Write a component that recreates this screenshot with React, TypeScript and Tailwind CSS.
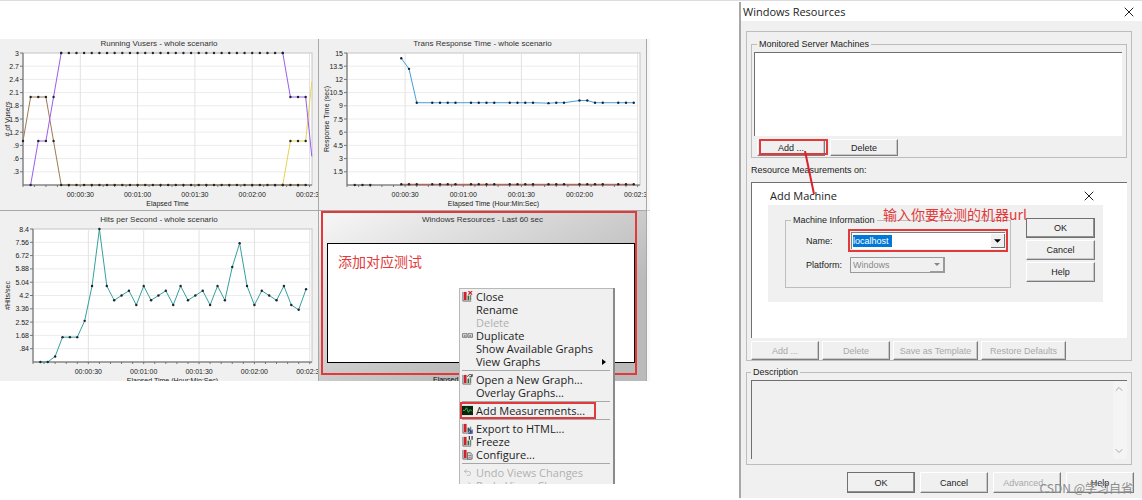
import type { ReactNode } from 'react';
import { X, ChevronUp, ChevronDown, Undo2, Redo2 } from 'lucide-react';
import clsx from 'clsx';

interface Series {
  color: string;
  points: [number, number][];
}

interface ChartProps {
  title: string;
  yTitle: string;
  xTitle: string;
  yLabels: string[];
  max: number;
  left: number;
  right: number;
  bottom: number;
  width: number;
  height: number;
  step: number;
  series: Series[];
}

const range = (from: number, to: number) => Array.from({ length: to - from + 1 }, (_, i) => from + i);
const flat = (from: number, to: number, value: number) => range(from, to).map((k): [number, number] => [k, value]);

// points are [sample index, value], one sample every 4 seconds
const vuserSeries: Series[] = [
  { color: '#e8d44d', points: [[34, 0], [35, 1], [36, 1], [37, 1], [37.8, 2.35]] },
  { color: '#a07a50', points: [[0, 1], [1, 2], [2, 2], [3, 2], [4, 1], ...flat(5, 37, 0)] },
  { color: '#9a5cf0', points: [[1, 0], [2, 1], [3, 1], [4, 2], [5, 3]] },
  { color: '#c4c4c4', points: flat(5, 34, 3) },
  { color: '#9a5cf0', points: [[34, 3], [35, 2], [36, 2], [37, 2], [37.8, 0.65]] },
];

const sampleTimes = [7, 8, 9, 11, 12, 13, 14, 16, 17, 18, 19, 21, 22, 23, 24, 26, 27, 28, 30, 31, 32, 33, 35, 36, 37];
const responseTimes: Record<number, number> = { 7: 14.4, 8: 13.2, 26: 9.3, 30: 9.6, 31: 9.6 };

const responseSeries: Series[] = [
  { color: '#8a8a8a', points: flat(1, 3, 0) },
  { color: '#c0553f', points: sampleTimes.map((k) => [k, 0.08]) },
  { color: '#3fa0e0', points: sampleTimes.map((k) => [k, responseTimes[k] ?? 9.35]) },
];

const hits = [
  0, 0, 0.35, 1.57, 1.57, 1.57, 2.6, 4.8, 8.4, 4.8, 3.9, 4.2, 4.5, 3.6, 4.8, 3.9, 4.2, 4.5, 3.6, 4.8, 3.9, 4.2, 4.5,
  3.6, 4.8, 3.9, 6, 7.5, 4.8, 3.6, 4.5, 4.2, 3.9, 4.8, 3.6, 3.3, 4.6,
];
const hitSeries: Series[] = [{ color: '#35a0a0', points: hits.map((v, i) => [i + 1, v]) }];

const timeLabels = ['00:00:30', '00:01:00', '00:01:30', '00:02:00', '00:02:30'];

function Chart({ title, yTitle, xTitle, yLabels, max, left, right, bottom, width, height, step, series }: ChartProps) {
  const top = 4;
  const x = (k: number) => left + k * step;
  const y = (v: number) => bottom - (v / max) * (bottom - top);
  return (
    <section>
      <h2 className="text-center text-[8px] leading-[10px] text-[#333]">{title}</h2>
      <svg viewBox={`0 0 ${width} ${height}`} className="block w-full overflow-hidden text-[7px]" fill="#222">
        <rect x={left} y={top} width={right - left} height={bottom - top} fill="#fff" stroke="#c4c4c4" />
        {yLabels.map((label, i) => {
          const ly = top + (i * (bottom - top)) / yLabels.length;
          return (
            <g key={label}>
              {i > 0 && <line x1={left} x2={right} y1={ly} y2={ly} stroke="#ececec" />}
              <line x1={left - 3} x2={left} y1={ly} y2={ly} stroke="#777" />
              <text x={left - 4} y={ly + 2.5} textAnchor="end">
                {label}
              </text>
            </g>
          );
        })}
        {timeLabels.map((label, i) => (
          <g key={label}>
            <line x1={x((i + 1) * 7.5)} x2={x((i + 1) * 7.5)} y1={top} y2={bottom + 3} stroke="#e2e2e2" />
            <text x={x((i + 1) * 7.5)} y={bottom + 12} textAnchor="middle">
              {label}
            </text>
          </g>
        ))}
        {range(0, 25).map((i) => (
          <line key={i} x1={x(i * 1.5)} x2={x(i * 1.5)} y1={bottom} y2={bottom + 2} stroke="#777" />
        ))}
        <path d={`M${left} ${top}V${bottom}H${right}`} fill="none" stroke="#666" />
        {series.map((s, i) => (
          <g key={i}>
            <polyline points={s.points.map(([k, v]) => `${x(k)},${y(v)}`).join(' ')} fill="none" stroke={s.color} />
            {s.points
              .filter(([k]) => Number.isInteger(k))
              .map(([k, v]) => (
                <circle key={k} cx={x(k)} cy={y(v)} r="1.2" fill="#1d2430" />
              ))}
          </g>
        ))}
        <text x={(left + right) / 2} y={bottom + 21} textAnchor="middle">
          {xTitle}
        </text>
        <text transform={`translate(10 ${(top + bottom) / 2}) rotate(-90)`} textAnchor="middle">
          {yTitle}
        </text>
      </svg>
    </section>
  );
}

function GraphIcon({ children }: { children?: ReactNode }) {
  return (
    <svg viewBox="0 0 12 12" className="size-[11px]" fill="none">
      <path d="M1 1V11H10" stroke="#666" />
      <path d="M2 1h3v9H2z" fill="#d0202c" />
      <path d="M6 5h2v5H6z" fill="#24703c" />
      <path d="M9 4h1v6H9z" fill="#555" />
      {children}
    </svg>
  );
}

const closeIcon = (
  <GraphIcon>
    <path d="M7 0l4 4M11 0L7 4" stroke="#d0202c" strokeWidth="1.3" />
  </GraphIcon>
);
const openIcon = (
  <GraphIcon>
    <path d="M6 3c1-3 4-3 5-1M11 0v3H8" stroke="#222" />
  </GraphIcon>
);
const exportIcon = (
  <GraphIcon>
    <path d="M7 6l3 4M11 7v4H7" stroke="#2a3c9a" strokeWidth="1.3" />
  </GraphIcon>
);
const freezeIcon = (
  <GraphIcon>
    <path d="M8 0v4M11 0v4" stroke="#333" strokeWidth="1.3" />
  </GraphIcon>
);
const configureIcon = (
  <GraphIcon>
    <path d="M6 4h3l2 2v5H6z" fill="#ddd" stroke="#666" />
    <path d="M7 7h3M7 9h3" stroke="#777" />
  </GraphIcon>
);
const duplicateIcon = (
  <svg viewBox="0 0 12 12" className="size-[11px]" fill="none" stroke="#777">
    <path d="M.5 4h5v4h-5zM6.500 4h5v4h-5z" fill="#ddd" />
    <path d="M2 6.500h2M8 6.500h2" stroke="#444" />
  </svg>
);
const measureIcon = (
  <svg viewBox="0 0 12 12" className="size-[11px]" fill="none">
    <path d="M0 1h12v10H0z" fill="#0b2410" />
    <path d="M1 6h2l2-3 2 5 2-3 2 2" stroke="#3ec24e" />
  </svg>
);

interface MenuItem {
  label: string;
  icon?: ReactNode;
  disabled?: boolean;
  submenu?: boolean;
  marked?: boolean;
}

const menuGroups: MenuItem[][] = [
  [
    { label: 'Close', icon: closeIcon },
    { label: 'Rename' },
    { label: 'Delete', disabled: true },
    { label: 'Duplicate', icon: duplicateIcon },
    { label: 'Show Available Graphs' },
    { label: 'View Graphs', submenu: true },
  ],
  [{ label: 'Open a New Graph...', icon: openIcon }, { label: 'Overlay Graphs...' }],
  [{ label: 'Add Measurements...', icon: measureIcon, marked: true }],
  [
    { label: 'Export to HTML...', icon: exportIcon },
    { label: 'Freeze', icon: freezeIcon },
    { label: 'Configure...', icon: configureIcon },
  ],
  [
    { label: 'Undo Views Changes', icon: <Undo2 className="size-[9px]" />, disabled: true },
    { label: 'Redo Views Changes', icon: <Redo2 className="size-[9px]" />, disabled: true },
  ],
];

function ContextMenu() {
  return (
    <div className="absolute left-[459px] top-[287px] z-10 h-[196px] w-[154px] overflow-hidden border-l border-t border-[#b8b8b8] bg-[#f0f0f0] pt-px font-['Open_Sans'] text-[11px] shadow-[2px_0_0_#8a8a8a]">
      {menuGroups.map((group, i) => (
        <div key={i}>
          {i > 0 && (
            <div className="flex h-[5px] items-center pl-[2px] pr-[3px]">
              <hr className="w-full border-[#a8a8a8]" />
            </div>
          )}
          {group.map((item) => (
            <button
              key={item.label}
              disabled={item.disabled}
              className={clsx(
                'relative flex h-[13px] w-full items-center gap-[3px] pl-[2px] text-left leading-[13px]',
                item.disabled ? 'text-[#b0b0b0]' : 'text-[#1c1c1c]',
              )}
            >
              <span className="flex w-[11px] justify-center">{item.icon}</span>
              {item.label}
              {item.submenu && (
                <svg viewBox="0 0 4 6" className="ml-auto mr-[7px] h-[6px] w-[4px]">
                  <path d="M0 0l4 3-4 3z" fill="#000" />
                </svg>
              )}
              {item.marked && <span className="absolute -inset-y-[2px] left-0 w-[136px] border-2 border-[#e23a3a]" />}
            </button>
          ))}
        </div>
      ))}
    </div>
  );
}

interface ButtonProps {
  children: ReactNode;
  className?: string;
  disabled?: boolean;
  primary?: boolean;
}

function Button({ children, className, disabled, primary }: ButtonProps) {
  return (
    <button
      disabled={disabled}
      className={clsx(
        'border bg-[#f0f0f0] text-center leading-[10px]',
        primary
          ? 'border-[#707070] shadow-[inset_-1px_-1px_0_#909090]'
          : 'border-b-[#7c7c7c] border-l-white border-r-[#7c7c7c] border-t-white shadow-[inset_-1px_-1px_0_#c8c8c8]',
        disabled ? 'text-[#a8a8a8]' : 'text-[#222]',
        className,
      )}
    >
      {children}
    </button>
  );
}

function AddMachine() {
  return (
    <div className="ml-[16px] mr-[24px] pt-[3px]">
      <div className="flex h-[19px] items-center justify-between pl-[2px] pr-[6px]">
        <h3 className="font-['Open_Sans'] text-[11px] text-[#222]">Add Machine</h3>
        <button aria-label="Close Add Machine">
          <X className="size-[16px]" strokeWidth={1.5} />
        </button>
      </div>
      <div className="relative flex justify-between bg-[#f0f0f0] pb-[14px] pl-[17px] pr-[8px] pt-[10px]">
        <fieldset className="w-[226px] border border-[#bdbdbd] pb-[14px] pl-[20px]">
          <legend className="-ml-[15px] px-[2px] leading-[10px]">Machine Information</legend>
          <div className="mt-[4px] flex items-center">
            <label htmlFor="name" className="w-[42px]">
              Name:
            </label>
            <div className="flex h-[23px] w-[160px] items-center border-2 border-[#e23a3a] p-px">
              <div className="flex h-full w-full items-center justify-between border-l border-t border-[#808080] bg-white pl-px">
                <input
                  id="name"
                  defaultValue="localhost"
                  className="h-[12px] w-[39px] bg-[#0078d7] leading-[12px] text-white outline-none"
                />
                <button
                  aria-label="Show machines"
                  className="flex h-[14px] w-[14px] items-center justify-center border-b border-r border-[#707070] bg-[#f0f0f0]"
                >
                  <svg viewBox="0 0 6 3" className="h-[4px] w-[7px]">
                    <path d="M0 0h6L3 3z" />
                  </svg>
                </button>
              </div>
            </div>
          </div>
          <div className="mt-[5px] flex items-center">
            <label htmlFor="platform" className="w-[44px]">
              Platform:
            </label>
            <div className="relative">
              <select
                id="platform"
                disabled
                className="block h-[16px] w-[95px] appearance-none border border-[#9a9a9a] bg-[#f0f0f0] pl-[2px] leading-[13px] text-[#8a8a8a]"
              >
                <option>Windows</option>
              </select>
              <span className="pointer-events-none absolute bottom-px right-px top-px flex w-[14px] items-center justify-center border-b border-r border-[#9a9a9a]">
                <svg viewBox="0 0 6 3" className="h-[3px] w-[6px]">
                  <path d="M0 0h6L3 3z" fill="#888" />
                </svg>
              </span>
            </div>
          </div>
        </fieldset>
        <div className="flex w-[69px] flex-col gap-[2px] pt-[3px]">
          <Button primary className="h-[20px]">OK</Button>
          <Button className="h-[20px]">Cancel</Button>
          <Button className="h-[20px]">Help</Button>
        </div>
        <p className="absolute left-[115px] top-0 whitespace-nowrap font-['Noto_Sans_CJK_SC',sans-serif] text-[14px] leading-[18px] text-[#e23a3a]">
          输入你要检测的机器url
        </p>
      </div>
    </div>
  );
}

function ResourcesDialog() {
  return (
    <div className="relative mt-px self-start border-l-2 border-[#a8a8a8] bg-[#f0f0f0] pb-[5px] text-[9px] leading-[10px] text-[#222]">
      <div className="flex h-[19px] items-center justify-between bg-white pl-[2px] pr-[5px]">
        <h1 className="font-['Open_Sans'] text-[11px] text-[#222]">Windows Resources</h1>
        <button aria-label="Close Windows Resources">
          <X className="size-[16px]" strokeWidth={1.5} />
        </button>
      </div>

      <div className="ml-[5px] mr-[10px] mt-[10px] border border-[#bdbdbd] px-[4px] pt-[7px]">
        <fieldset className="border border-[#bdbdbd] pb-px pl-[2px] pr-[4px]">
          <legend className="ml-[3px] px-[2px]">Monitored Server Machines</legend>
          <div className="mt-[3px] h-[84px] border-l border-t border-[#707070] bg-white" />
          <div className="mt-[3px] flex gap-[5px] pl-[3px]">
            <div className="relative flex">
              <Button className="h-[17px] w-[68px]">Add ...</Button>
              <span className="absolute -right-[3px] bottom-px left-[2px] top-0 border-2 border-[#e23a3a]" />
            </div>
            <Button className="h-[17px] w-[68px]">Delete</Button>
          </div>
        </fieldset>
        <p className="mt-[7px]">Resource Measurements on:</p>
        <div className="mt-[7px] h-[156px] border-l border-t border-[#707070] bg-white">
          <AddMachine />
        </div>
        <div className="mt-[3px] flex gap-[3px]">
          <Button disabled className="h-[19px] w-[68px]">Add ...</Button>
          <Button disabled className="h-[19px] w-[68px]">Delete</Button>
          <Button disabled className="h-[19px] w-[85px]">Save as Template</Button>
          <Button disabled className="h-[19px] w-[85px]">Restore Defaults</Button>
        </div>
      </div>

      <fieldset className="ml-[5px] mr-[10px] mt-[6px] border border-[#bdbdbd] px-[4px] pb-[5px]">
        <legend className="px-[2px]">
          <label htmlFor="description">Description</label>
        </legend>
        <div className="relative mt-[3px]">
          <textarea
            id="description"
            readOnly
            className="block h-[79px] w-full resize-none border-l border-t border-[#707070] bg-[#f0f0f0] outline-none"
          />
          <div className="absolute bottom-0 right-0 top-px flex w-[14px] flex-col justify-between bg-[#f4f4f4] py-[2px] text-[#aaa]">
            <ChevronUp className="size-[12px]" />
            <ChevronDown className="size-[12px]" />
          </div>
        </div>
      </fieldset>

      <div className="mt-[7px] flex justify-end gap-[5px] pr-[8px]">
        <Button primary className="h-[21px] w-[68px]">OK</Button>
        <Button className="h-[21px] w-[68px]">Cancel</Button>
        <Button disabled className="h-[21px] w-[68px]">Advanced...</Button>
        <Button className="h-[21px] w-[68px]">Help</Button>
      </div>

      {/* pointer from the Add button to the Add Machine title */}
      <svg viewBox="0 0 12 44" className="absolute left-[63px] top-[149px] h-[44px] w-[12px]">
        <path d="M1 0L10 43" stroke="#d8222e" strokeWidth="2" />
      </svg>
      <p className="absolute bottom-[3px] right-[9px] font-['Noto_Sans_CJK_SC',sans-serif] text-[12px] leading-[14px] text-[#8c8c8c]">
        CSDN @学习自省
      </p>
    </div>
  );
}

export default function App() {
  return (
    <main className="min-h-screen border-t border-[#dcdcdc] bg-white font-['Liberation_Sans',Arial,sans-serif]">
      <div className="relative grid grid-cols-[650fr_89fr_403fr]">
        <div className="mt-[38px] grid grid-cols-[319fr_328fr_3fr] self-start bg-[#f0f0f0]">
          <div className="border-b border-r border-[#a8a8a8]">
            <Chart
              title="Running Vusers - whole scenario"
              yTitle="# of Vusers"
              xTitle="Elapsed Time"
              yLabels={['3', '2.7', '2.4', '2.1', '1.8', '1.5', '1.2', '.9', '.6', '.3']}
              max={3}
              left={23}
              right={312}
              bottom={136}
              width={318}
              height={161}
              step={7.64}
              series={vuserSeries}
            />
          </div>
          <div className="border-b border-r border-[#a8a8a8]">
            <Chart
              title="Trans Response Time - whole scenario"
              yTitle="Response Time (sec)"
              xTitle="Elapsed Time (Hour:Min:Sec)"
              yLabels={['15', '13.5', '12', '10.5', '9', '7.5', '6', '4.5', '3', '1.5']}
              max={15}
              left={28}
              right={321}
              bottom={136}
              width={327}
              height={161}
              step={7.75}
              series={responseSeries}
            />
          </div>
          <div className="border-b border-[#d0d0d0] bg-[#f8f8f8]" />
          <div className="border-r border-[#a8a8a8] pt-[4px]">
            <Chart
              title="Hits per Second - whole scenario"
              yTitle="#Hits/sec"
              xTitle="Elapsed Time (Hour:Min:Sec)"
              yLabels={['8.4', '7.56', '6.72', '5.88', '5.04', '4.2', '3.36', '2.52', '1.68', '.84']}
              max={8.4}
              left={33}
              right={312}
              bottom={137}
              width={318}
              height={156}
              step={7.38}
              series={hitSeries}
            />
          </div>
          <div className="relative h-[170px] overflow-hidden border-r border-[#a8a8a8] bg-linear-to-br from-[#f8f8f8] to-[#bababa] to-70% pt-[4px]">
            <h2 className="text-center text-[8px] leading-[10px] text-[#333]">Windows Resources - Last 60 sec</h2>
            <div className="ml-[8px] mr-[11px] mt-[18px] h-[120px] border border-black bg-white pl-[10px] pt-[8px]">
              <p className="font-['Noto_Sans_CJK_SC',sans-serif] text-[14px] leading-[18px] text-[#e23a3a]">添加对应测试</p>
            </div>
            <p className="mt-[12px] pl-[114px] text-[7px] leading-[10px]">Elapsed Time (Hour:Min:Sec)</p>
            <span className="absolute bottom-[6px] left-[2px] right-[9px] top-0 border-2 border-[#e23a3a]" />
          </div>
          <div className="bg-[#f8f8f8]" />
        </div>
        <div />
        <ResourcesDialog />
        <ContextMenu />
      </div>
    </main>
  );
}
